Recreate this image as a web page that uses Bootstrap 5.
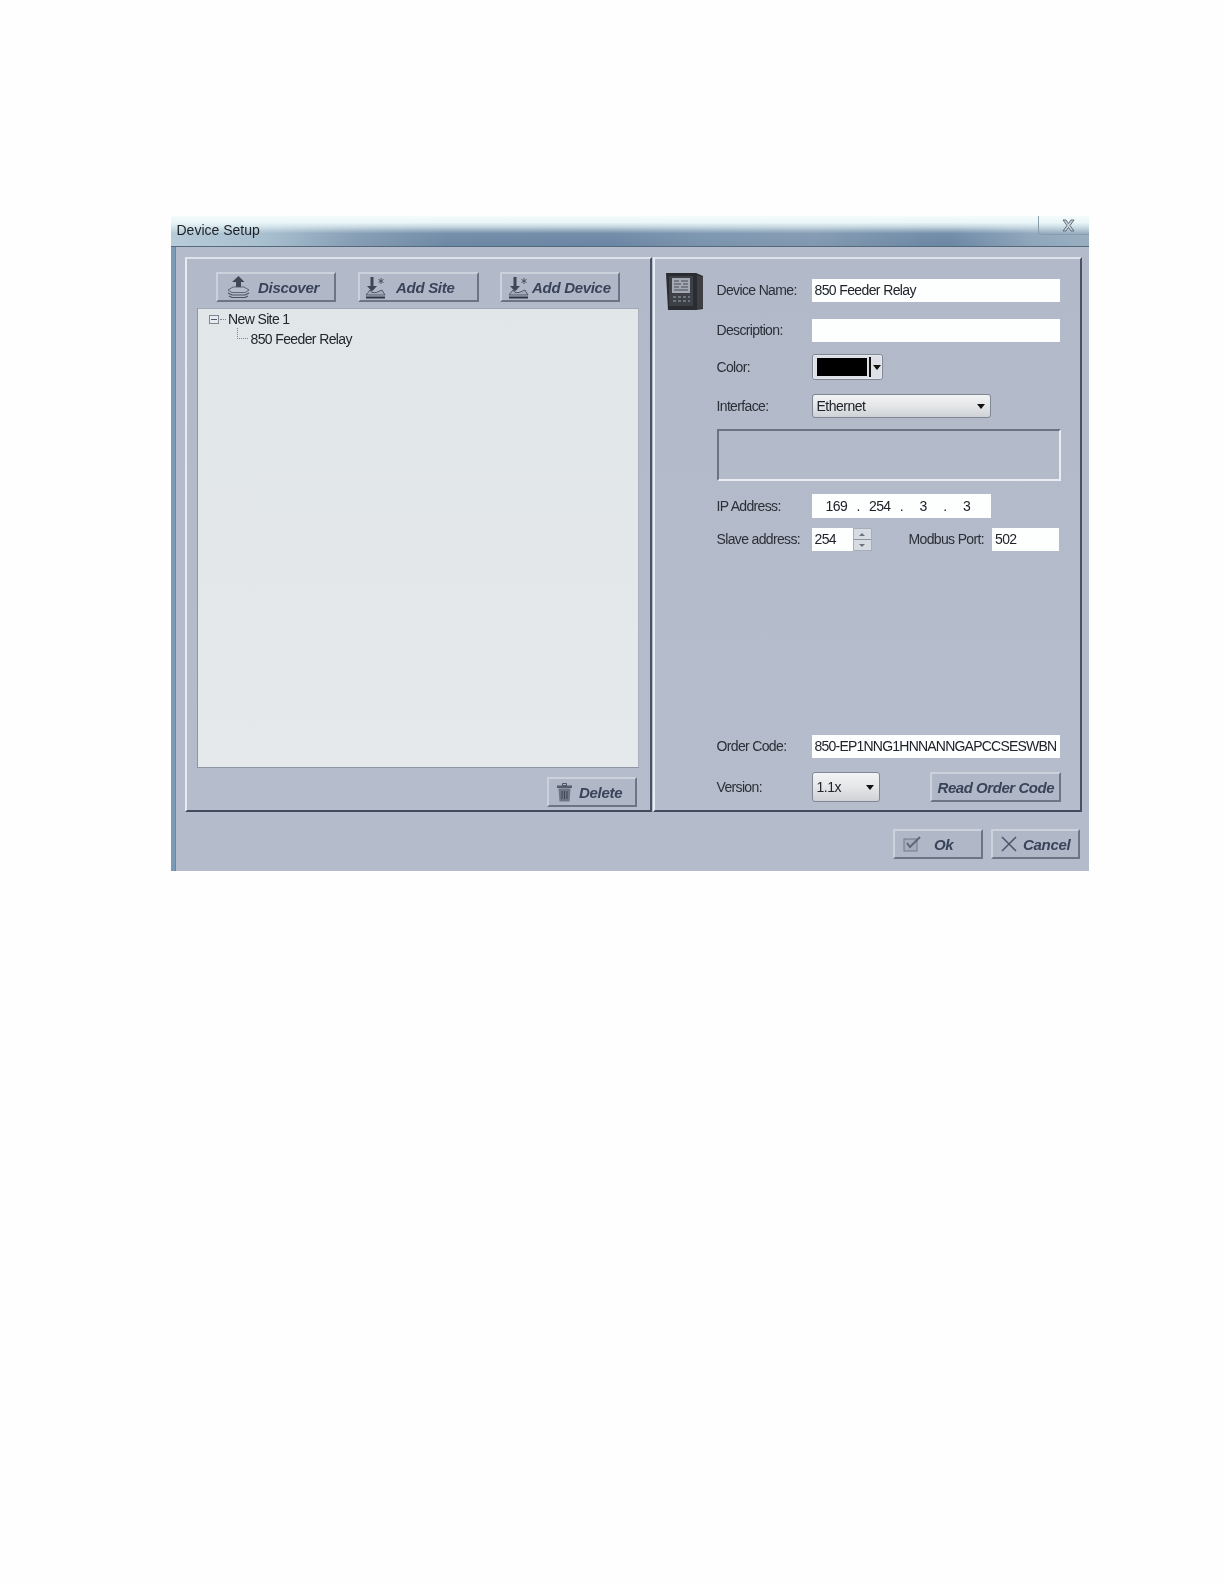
<!DOCTYPE html>
<html lang="en">
<head>
<meta charset="utf-8">
<title>Device Setup</title>
<link href="https://cdn.jsdelivr.net/npm/bootstrap@5.3.0/dist/css/bootstrap.min.css" rel="stylesheet">
<style>
body{background:#fefefe;margin:0;font-family:"Liberation Sans",Arial,sans-serif;font-size:14px;color:#23262c;}
.page-wrap{padding:216px 135px 713px 171px;}
.dlg{width:918px;height:655px;filter:blur(.4px);}
.dlg-title{height:31px;position:relative;padding:4px 0 0 5.500px;font-size:14px;color:#1d2126;
 background:
  linear-gradient(180deg,#f4fbfc 0,#e9f5f7 22%,rgba(225,240,243,.75) 36%,rgba(170,190,208,.15) 58%,rgba(160,185,205,0) 100%),
  linear-gradient(90deg,#b8ccd9 0,#a9c0d0 10%,#849cb3 20%,#6d88a4 30%,#6a85a3 48%,#7a93ad 58%,#8098b0 70%,#6d88a4 82%,#6b87a4 85%,#8fa6bb 94%,#98aec0 100%);
 border-bottom:1px solid #55697c;}
.close-tab{position:absolute;top:0;right:0;width:51px;height:19px;border-left:1px solid #8b9cac;border-bottom:1px solid #8b9cac;border-bottom-left-radius:4px;display:flex;align-items:center;justify-content:center;padding-left:8px;}
.dlg-body{height:624px;background:#b4bbca;border-left:4px solid #7a9ab8;padding:10px 7px 0 10px;box-shadow:inset 1px 0 0 #6c87a3;position:relative;}
.pane{height:555px;border:2px solid;border-color:#dfe4ec #4a5363 #434c5c #e7ebf2;background:linear-gradient(180deg,#b2b9c8,#b5bccb);}
.pane-left{width:467px;padding:13px 0 3px;}
.pane-right{width:429px;margin-left:1px;padding:0 19px 8px 11px;}
.tool-btn{height:30px;padding:0;border-radius:0;border:2px solid;border-color:#ccd2dc #6d7585 #6d7585 #ccd2dc;background:#b0b8c7;color:#39435a;font-weight:700;font-style:italic;font-size:15px;letter-spacing:-.3px;--bs-btn-hover-bg:#b0b8c7;--bs-btn-hover-color:#39435a;--bs-btn-hover-border-color:#6d7585;white-space:nowrap;display:flex;align-items:center;flex:none;line-height:1;}
.btn-disc{width:120px;padding-left:9px;}
.btn-site{width:121px;padding-left:5px;margin-left:22px;}
.btn-devc{width:120px;padding-left:6px;margin-left:21px;}
.btn-del{width:90px;padding-left:8px;}
.btn-read{width:131px;padding-left:6px;letter-spacing:-.45px;}
.btn-ok{width:90px;padding-left:8px;}
.btn-can{width:89px;padding-left:8px;}
.ic-disc{margin-right:8px;}
.ic-site{margin-right:10px;}
.ic-devc{margin-right:3px;}
.ic-del{margin-right:7px;}
.ic-ok{margin-right:12px;}
.ic-can{margin-right:6px;}
.tool-row{padding-left:29px;}
.tree-box{height:460px;margin:6px 11.500px 0 10px;background:linear-gradient(180deg,#e1e6e9,#e6e9eb);border:1px solid;border-color:#a1a8b5 #a9afbb #8f96a3 #8f96a3;padding-top:1px;}
.tree-line{height:19.500px;display:flex;align-items:center;white-space:nowrap;letter-spacing:-.62px;}
.tree-one{padding-left:11px;}
.tree-two{padding-left:38.500px;}
.del-wrap{padding:9px 13px 0 0;}
.exp-box{width:10px;height:9px;border:1px solid #7d8694;background:#e8ebee;position:relative;margin-right:1px;}
.exp-box::after{content:"";position:absolute;left:1px;right:1px;top:3px;height:1px;background:#555c68;}
.tick-h{width:6px;border-top:1px dotted #7d8694;margin-right:2px;}
.branch{width:11px;height:11px;border-left:1px dotted #7d8694;border-bottom:1px dotted #7d8694;margin-right:3px;margin-top:-11px;}
.relay-col{width:50.500px;flex:none;padding-top:14px;}
.lbl{width:95px;flex:none;letter-spacing:-.65px;color:#2b2f37;}
.fld{background:#fdfefe;height:100%;display:flex;align-items:center;padding-left:3px;letter-spacing:-.62px;color:#20232a;}
.w-full{width:248px;}
.h23{height:23px;}.h24{height:24px;}.h26{height:26px;}.h30{height:30px;}
.m20{margin-top:20px;}.m17{margin-top:17px;}.m12{margin-top:12px;}.m11{margin-top:11px;}.m14{margin-top:14px;}.m13{margin-top:13px;}.m10{margin-top:10px;}
.color-pick{width:71px;height:26px;background:#dde1e7;border:1px solid #7f8794;border-radius:3px;padding:0 0 0 4px;display:flex;align-items:center;outline:1px solid #e6e9ee;outline-offset:-2px;}
.swatch{width:50px;height:18px;background:#000;flex:none;}
.sep{width:2px;height:20px;background:#111;margin-left:2px;margin-right:2px;flex:none;}
.tri{width:0;height:0;border-left:4px solid transparent;border-right:4px solid transparent;border-top:5px solid #111;flex:none;}
.combo{height:100%;background:linear-gradient(180deg,#f2f3f4,#e4e6e8 50%,#cfd2d5);border:1px solid #7f8794;border-radius:3px;display:flex;align-items:center;justify-content:space-between;padding:1px 5px 0 4px;letter-spacing:-.5px;color:#20232a;}
.combo-a{width:179px;}
.combo-b{width:68px;}
.groupbox{width:344px;height:52px;border:2px solid;border-color:#6b7380 #e9edf2 #e9edf2 #6b7380;}
.ip-field{width:179px;padding-left:14px;}
.ipseg{width:21.700px;text-align:center;flex:none;}
.port-f{width:67px;}
.slave-f{width:41px;}
.spin{width:19px;height:100%;background:#c6ccd6;border:1px solid #a7aebb;display:flex;flex-direction:column;}
.spin-p{flex:1;display:flex;align-items:center;justify-content:center;background:#d7dbe2;}
.spin-p+.spin-p{border-top:1px solid #8d95a3;}
.up{border-left:3px solid transparent;border-right:3px solid transparent;border-bottom:3px solid #6a7280;}
.dn{border-left:3px solid transparent;border-right:3px solid transparent;border-top:3px solid #6a7280;}
.port-lbl{margin-left:37px;width:83.500px;flex:none;letter-spacing:-.65px;color:#2b2f37;white-space:nowrap;}
.order-f{letter-spacing:-.78px;white-space:nowrap;overflow:hidden;}
.foot-row{padding:17px 0 0 0;margin-right:2px;gap:8px;}
.right-form{width:344px;flex:none;}
</style>
</head>
<body>
<div class="page-wrap">
 <div class="dlg">
  <div class="dlg-title">Device Setup
   <div class="close-tab"><svg width="15" height="13" viewBox="0 0 15 13"><path d="M2 1h3l2.500 3.500L10 1h3l-4 5.500 4 5.500h-3L7.500 8.500 5 12H2l4-5.500z" fill="#c8d2db" stroke="#5f6c79"/></svg></div>
  </div>
  <div class="dlg-body">
   <div class="d-flex">
    <div class="pane pane-left d-flex flex-column">
     <div class="d-flex tool-row">
      <button class="btn tool-btn btn-disc" type="button">
       <svg class="ic-disc" width="23" height="24" viewBox="0 0 23 24"><path d="M11.500 1l6 6h-3.500v6h-5V7H5z" fill="#3f4757"/><path d="M1 15l5-3h11l5 3-4 2.500H5z" fill="#b6bdca" stroke="#4a5262" stroke-width=".8"/><path d="M1 18l4 2h13l4-2M2 21l3 1.500h13l3-1.500" fill="none" stroke="#4a5262" stroke-width="1.100"/></svg>
       <span>Discover</span></button>
      <button class="btn tool-btn btn-site" type="button">
       <svg class="ic-site" width="21" height="23" viewBox="0 0 21 23"><path d="M5.500 1h3v9h3.500L7 15.500 2 10h3.500z" fill="#3f4757"/><path d="M16 2v6M13.500 3.500l5 3M18.500 3.500l-5 3" stroke="#4c5464"/><path d="M1 19l4-5 2 2.500h4l6-2.500 3 5z" fill="#a3abb9" stroke="#3f4757" stroke-width=".8"/><path d="M1 21.500h19" stroke="#2f3644" stroke-width="2"/></svg>
       <span>Add Site</span></button>
      <button class="btn tool-btn btn-devc" type="button">
       <svg class="ic-devc" width="21" height="23" viewBox="0 0 21 23"><path d="M5.500 1h3v9h3.500L7 15.500 2 10h3.500z" fill="#3f4757"/><path d="M16 2v6M13.500 3.500l5 3M18.500 3.500l-5 3" stroke="#4c5464"/><path d="M1 19l4-5 2 2.500h4l6-2.500 3 5z" fill="#a3abb9" stroke="#3f4757" stroke-width=".8"/><path d="M1 21.500h19" stroke="#2f3644" stroke-width="2"/></svg>
       <span>Add Device</span></button>
     </div>
     <div class="tree-box">
      <div class="tree-line tree-one"><span class="exp-box"></span><span class="tick-h"></span>New Site 1</div>
      <div class="tree-line tree-two"><span class="branch"></span>850 Feeder Relay</div>
     </div>
     <div class="d-flex justify-content-end del-wrap">
      <button class="btn tool-btn btn-del" type="button">
       <svg class="ic-del" width="15" height="19" viewBox="0 0 15 19"><path d="M5.500 .5h4v2h-4z" fill="none" stroke="#4b5362"/><rect x="0" y="2.500" width="15" height="2.500" fill="#555d6c"/><path d="M1.500 5.500h12l-1 13h-10z" fill="#6e7685"/><path d="M5 8v8M7.500 8v8M10 8v8" stroke="#3c4452"/></svg>
       <span>Delete</span></button>
     </div>
    </div>
    <div class="pane pane-right d-flex">
     <div class="relay-col">
      <svg width="38" height="37" viewBox="0 0 38 37"><path d="M0 0h30l7 3v33l-7 1H2z" fill="#2b2c31"/><path d="M31 2l6 2v31l-6 1z" fill="#3d3f44"/><rect x="3" y="3" width="24" height="30" fill="#3e4047"/><rect x="6" y="5" width="18" height="15" fill="#a3a8b2"/><path d="M8 8h5M15 8h7M8 11h7M17 11h5M8 14h5M15 14h7M8 17h14" stroke="#666b75" stroke-width="1.500"/><path d="M7 24h3M12 24h3M17 24h3M22 24h2M7 28h3M12 28h3M17 28h3M22 28h2" stroke="#7f858f" stroke-width="1.500"/></svg>
     </div>
     <div class="right-form d-flex flex-column">
      <div class="d-flex align-items-center h23 m20"><span class="lbl">Device Name:</span><div class="fld w-full">850 Feeder Relay</div></div>
      <div class="d-flex align-items-center h23 m17"><span class="lbl">Description:</span><div class="fld w-full"></div></div>
      <div class="d-flex align-items-center h26 m12"><span class="lbl">Color:</span><div class="color-pick"><span class="swatch"></span><span class="sep"></span><span class="tri"></span></div></div>
      <div class="d-flex align-items-center h24 m14"><span class="lbl">Interface:</span><div class="combo combo-a"><span>Ethernet</span><span class="tri"></span></div></div>
      <div class="groupbox m11"></div>
      <div class="d-flex align-items-center h24 m13"><span class="lbl">IP Address:</span><div class="fld ip-field"><span class="ipseg">169</span><span class="ipseg">.</span><span class="ipseg">254</span><span class="ipseg">.</span><span class="ipseg">3</span><span class="ipseg">.</span><span class="ipseg">3</span></div></div>
      <div class="d-flex align-items-center h23 m10"><span class="lbl">Slave address:</span><div class="fld slave-f">254</div><div class="spin"><span class="spin-p"><span class="up"></span></span><span class="spin-p"><span class="dn"></span></span></div><span class="port-lbl">Modbus Port:</span><div class="fld port-f">502</div></div>
      <div class="d-flex align-items-center h23 mt-auto"><span class="lbl">Order Code:</span><div class="fld w-full order-f">850-EP1NNG1HNNANNGAPCCSESWBN</div></div>
      <div class="d-flex align-items-center h30 m14"><span class="lbl">Version:</span><div class="combo combo-b h24"><span>1.1x</span><span class="tri"></span></div>
       <button class="btn tool-btn btn-read ms-auto" type="button">Read Order Code</button></div>
     </div>
    </div>
   </div>
   <div class="d-flex justify-content-end foot-row">
    <button class="btn tool-btn btn-ok" type="button">
     <svg class="ic-ok" width="19" height="16" viewBox="0 0 19 16"><rect x="1" y="3" width="13" height="12" fill="#a6aebd" stroke="#737b8b"/><path d="M4 7l3 4 10-10" fill="none" stroke="#5f6878" stroke-width="2"/></svg>
     <span>Ok</span></button>
    <button class="btn tool-btn btn-can" type="button">
     <svg class="ic-can" width="16" height="16" viewBox="0 0 16 16"><path d="M1 1l14 14M15 1L1 15" stroke="#4c5564" stroke-width="1.500"/></svg>
     <span>Cancel</span></button>
   </div>
  </div>
 </div>
</div>
<script src="https://cdn.jsdelivr.net/npm/bootstrap@5.3.0/dist/js/bootstrap.bundle.min.js"></script>
</body>
</html>
